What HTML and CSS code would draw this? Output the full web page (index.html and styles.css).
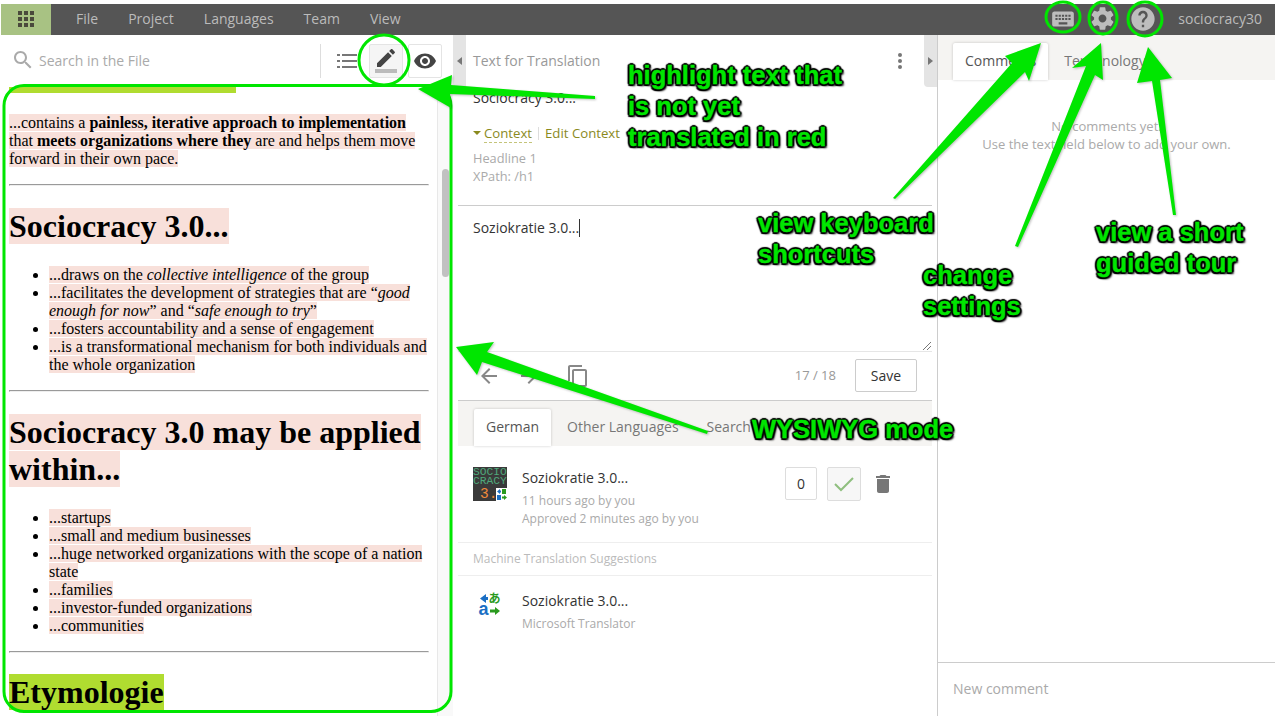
FILE: index.html
```html
<!DOCTYPE html>
<html>
<head>
<title>Text for Translation</title>
<link rel="stylesheet" href="styles.css">
</head>
<body>
<div class="app">

<div class="topbar">
  <div class="grid-btn">
    <svg width="16" height="16" viewBox="0 0 16 16" fill="#4a4a3c"><rect x="0" y="0" width="4" height="4"/><rect x="6" y="0" width="4" height="4"/><rect x="12" y="0" width="4" height="4"/><rect x="0" y="6" width="4" height="4"/><rect x="6" y="6" width="4" height="4"/><rect x="12" y="6" width="4" height="4"/><rect x="0" y="12" width="4" height="4"/><rect x="6" y="12" width="4" height="4"/><rect x="12" y="12" width="4" height="4"/></svg>
  </div>
  <div class="nav"><span>File</span><span>Project</span><span>Languages</span><span>Team</span><span>View</span></div>
  <div class="top-right">
    <svg class="kbd" width="26" height="26" viewBox="0 0 24 24" fill="#bdbdbd"><path d="M20 5H4c-1.1 0-1.99.9-1.99 2L2 17c0 1.1.9 2 2 2h16c1.1 0 2-.9 2-2V7c0-1.1-.9-2-2-2zm-9 3h2v2h-2V8zm0 3h2v2h-2v-2zM8 8h2v2H8V8zm0 3h2v2H8v-2zm-1 2H5v-2h2v2zm0-3H5V8h2v2zm9 7H8v-2h8v2zm0-4h-2v-2h2v2zm0-3h-2V8h2v2zm3 3h-2v-2h2v2zm0-3h-2V8h2v2z"/></svg>
    <svg class="gear" width="27" height="27" viewBox="0 0 24 24" fill="#bdbdbd"><path d="M19.43 12.98c.04-.32.07-.64.07-.98s-.03-.66-.07-.98l2.11-1.65c.19-.15.24-.42.12-.64l-2-3.46c-.12-.22-.39-.3-.61-.22l-2.49 1c-.52-.4-1.08-.73-1.69-.98l-.38-2.65C14.46 2.18 14.25 2 14 2h-4c-.25 0-.46.18-.49.42l-.38 2.65c-.61.25-1.17.59-1.69.98l-2.49-1c-.23-.09-.49 0-.61.22l-2 3.46c-.13.22-.07.49.12.64l2.11 1.65c-.04.32-.07.65-.07.98s.03.66.07.98l-2.11 1.65c-.19.15-.24.42-.12.64l2 3.46c.12.22.39.3.61.22l2.49-1c.52.4 1.08.73 1.69.98l.38 2.65c.03.24.24.42.49.42h4c.25 0 .46-.18.49-.42l.38-2.65c.61-.25 1.17-.59 1.69-.98l2.49 1c.23.09.49 0 .61-.22l2-3.46c.12-.22.07-.49-.12-.64l-2.11-1.65zM12 15.5c-1.93 0-3.5-1.57-3.5-3.5s1.57-3.5 3.5-3.5 3.5 1.57 3.5 3.5-1.57 3.5-3.5 3.5z"/></svg>
    <svg class="help" width="28" height="28" viewBox="0 0 24 24" fill="#bdbdbd"><path d="M12 2C6.48 2 2 6.48 2 12s4.48 10 10 10 10-4.48 10-10S17.52 2 12 2zm1 17h-2v-2h2v2zm2.07-7.75l-.9.92C13.45 12.9 13 13.5 13 15h-2v-.5c0-1.1.45-2.1 1.17-2.83l1.24-1.26c.37-.36.59-.86.59-1.41 0-1.1-.9-2-2-2s-2 .9-2 2H8c0-2.21 1.79-4 4-4s4 1.79 4 4c0 .88-.36 1.68-.93 2.25z"/></svg>
    <span class="user">sociocracy30</span>
  </div>
</div>

<div class="columns">

  <div class="left">
    <div class="search-row">
      <svg class="search-icon" width="24" height="24" viewBox="0 0 24 24" fill="#aaa"><path d="M15.5 14h-.79l-.28-.27C15.41 12.59 16 11.11 16 9.5 16 5.91 13.09 3 9.5 3S3 5.91 3 9.5 5.91 16 9.5 16c1.61 0 3.09-.59 4.23-1.57l.27.28v.79l5 4.99L20.49 19l-4.99-5zm-6 0C7.01 14 5 11.99 5 9.5S7.01 5 9.5 5 14 7.01 14 9.5 11.99 14 9.5 14z"/></svg>
      <span class="search-text">Search in the File</span>
      <div class="mode-btns">
        <svg class="list-icon" width="20" height="16" viewBox="0 0 20 16" fill="#777"><rect x="0" y="1" width="3" height="2"/><rect x="5" y="1" width="15" height="2"/><rect x="0" y="7" width="3" height="2"/><rect x="5" y="7" width="15" height="2"/><rect x="0" y="13" width="3" height="2"/><rect x="5" y="13" width="15" height="2"/></svg>
        <div class="mode-btn active">
          <svg width="24" height="24" viewBox="0 0 24 24" fill="#444"><path d="M3 17.25V21h3.75L17.81 9.94l-3.75-3.75L3 17.25zM20.71 7.04c.39-.39.39-1.02 0-1.41l-2.34-2.34c-.39-.39-1.02-.39-1.41 0l-1.83 1.83 3.75 3.75 1.83-1.83z"/></svg>
          <div class="pencil-line"></div>
        </div>
        <div class="mode-btn">
          <svg width="24" height="24" viewBox="0 0 24 24" fill="#444"><path d="M12 4.5C7 4.5 2.73 7.61 1 12c1.73 4.39 6 7.5 11 7.5s9.27-3.11 11-7.5c-1.73-4.39-6-7.5-11-7.5zM12 17c-2.76 0-5-2.24-5-5s2.24-5 5-5 5 2.24 5 5-2.24 5-5 5zm0-8c-1.66 0-3 1.34-3 3s1.34 3 3 3 3-1.34 3-3-1.34-3-3-3z"/></svg>
        </div>
      </div>
    </div>
    <div class="progress"></div>
    <div class="doc-wrap">
      <div class="doc">
        <p><span class="hl">...contains a <b>painless, iterative approach to implementation</b> that <b>meets organizations where they</b> are and helps them move forward in their own pace.</span></p>
        <hr>
        <h1><span class="hl">Sociocracy 3.0...</span></h1>
        <ul>
          <li><span class="hl">...draws on the <i>collective intelligence</i> of the group</span></li>
          <li><span class="hl">...facilitates the development of strategies that are &ldquo;<i>good enough for now</i>&rdquo; and &ldquo;<i>safe enough to try</i>&rdquo;</span></li>
          <li><span class="hl">...fosters accountability and a sense of engagement</span></li>
          <li><span class="hl">...is a transformational mechanism for both individuals and the whole organization</span></li>
        </ul>
        <hr>
        <h1><span class="hl">Sociocracy 3.0 may be applied within...</span></h1>
        <ul>
          <li><span class="hl">...startups</span></li>
          <li><span class="hl">...small and medium businesses</span></li>
          <li><span class="hl">...huge networked organizations with the scope of a nation state</span></li>
          <li><span class="hl">...families</span></li>
          <li><span class="hl">...investor-funded organizations</span></li>
          <li><span class="hl">...communities</span></li>
        </ul>
        <hr>
        <h1><span class="hl-done">Etymologie</span></h1>
      </div>
      <div class="scroll-track"><div class="scroll-thumb"></div></div>
    </div>
  </div>

  <div class="middle">
    <div class="mid-head">
      <div class="gutter"><span class="tri-left"></span></div>
      <span class="mid-title">Text for Translation</span>
      <svg class="dots" width="4" height="16" viewBox="0 0 4 16" fill="#777"><circle cx="2" cy="2" r="2"/><circle cx="2" cy="8" r="2"/><circle cx="2" cy="14" r="2"/></svg>
      <div class="gutter"><span class="tri-right"></span></div>
    </div>
    <div class="source">
      <div class="source-text">Sociocracy 3.0...</div>
      <div class="context-row"><span class="tri-down"></span><span class="context-link">Context</span><span class="context-sep"></span><span>Edit Context</span></div>
      <div class="meta">Headline 1<br>XPath: /h1</div>
    </div>
    <div class="editor">
      <span>Soziokratie 3.0...</span><span class="caret"></span>
      <svg class="grip" width="9" height="9" viewBox="0 0 9 9" stroke="#777" stroke-width="1"><path d="M1 9L9 1M5 9L9 5"/></svg>
    </div>
    <div class="tools">
      <svg width="24" height="24" viewBox="0 0 24 24" fill="#888"><path d="M20 11H7.83l5.59-5.59L12 4l-8 8 8 8 1.41-1.41L7.83 13H20v-2z"/></svg>
      <svg class="tool-next" width="24" height="24" viewBox="0 0 24 24" fill="#888"><path d="M12 4l-1.41 1.41L16.17 11H4v2h12.17l-5.58 5.59L12 20l8-8z"/></svg>
      <svg class="tool-copy" width="24" height="24" viewBox="0 0 24 24" fill="#888"><path d="M16 1H4c-1.1 0-2 .9-2 2v14h2V3h12V1zm3 4H8c-1.1 0-2 .9-2 2v14c0 1.1.9 2 2 2h11c1.1 0 2-.9 2-2V7c0-1.1-.9-2-2-2zm0 16H8V7h11v14z"/></svg>
      <span class="counter">17 / 18</span>
      <span class="save">Save</span>
    </div>
    <div class="tabs mid-tabs">
      <span class="tab on">German</span><span class="tab">Other Languages</span><span class="tab">Search</span>
    </div>
    <div class="result">
      <div class="avatar">
        <div class="avatar-name">SOCIO<br>CRACY</div>
        <div class="avatar-num">3.0</div>
        <svg class="avatar-badge" width="11" height="13" viewBox="0 0 11 13"><rect width="11" height="13" fill="#fff"/><path d="M1 3.500L4 1v1.500h1v2H4V6z" fill="#1b6fc4"/><rect x="1" y="7" width="4" height="5" fill="#1b6fc4"/><rect x="6" y="1" width="4" height="5" fill="#2a9a1e"/><path d="M6 8.500h2V7l3 2.500L8 12v-1.500H6z" fill="#2a9a1e"/></svg>
      </div>
      <div class="result-body">
        <div class="result-text">Soziokratie 3.0...</div>
        <div class="sub">11 hours ago by you</div>
        <div class="sub">Approved 2 minutes ago by you</div>
      </div>
      <span class="vote">0</span>
      <span class="approve"><svg width="20" height="16" viewBox="0 0 20 16" fill="none" stroke="#8fbf7f" stroke-width="2"><path d="M1 8l6 6L19 2"/></svg></span>
      <svg class="trash" width="24" height="24" viewBox="0 0 24 24" fill="#777"><path d="M6 19c0 1.1.9 2 2 2h8c1.100 0 2-.9 2-2V7H6v12zM19 4h-3.5l-1-1h-5l-1 1H5v2h14V4z"/></svg>
    </div>
    <div class="mt-head">Machine Translation Suggestions</div>
    <div class="mt-row">
      <svg class="mt-icon" width="24" height="25" viewBox="0 0 24 25">
        <path d="M2 7.500L8 3v3h2v3H8v3z" fill="#1b6fc4"/>
        <text x="10.500" y="12" class="mt-ja">あ</text>
        <text x="0.500" y="23.500" class="mt-en">a</text>
        <path d="M12 18.500h5V16l5 4-5 4v-2.500h-5z" fill="#2a9a1e"/>
      </svg>
      <div>
        <div class="result-text">Soziokratie 3.0...</div>
        <div class="sub">Microsoft Translator</div>
      </div>
    </div>
  </div>

  <div class="right">
    <div class="tabs right-tabs">
      <span class="tab on">Comments</span><span class="tab">Terminology</span>
    </div>
    <div class="no-comments">No comments yet.<br>Use the text field below to add your own.</div>
    <div class="new-comment">New comment</div>
  </div>

</div>

<div class="notes">
  <svg class="notes-art" width="1275" height="716" viewBox="0 0 1275 716">
    <g fill="none" stroke="#00e600" stroke-width="3">
      <rect x="4" y="85.500" width="447" height="626" rx="20"/>
      <ellipse cx="384" cy="60" rx="25" ry="25"/>
      <ellipse cx="1063" cy="17" rx="17" ry="15"/>
      <ellipse cx="1103" cy="18" rx="14" ry="16"/>
      <ellipse cx="1145" cy="19" rx="17" ry="17"/>
    </g>
    <g class="arrows" fill="#00e600">
      <path d="M418 89L452 75L451 85L595 96L595 99L450 94L451 108z"/>
      <path d="M1041 43L1005 56L1012 63L893 198L895 199L1025 72L1029 81z"/>
      <path d="M1101 43L1072 68L1086 66L1015 246L1018 247L1095 75L1103 80z"/>
      <path d="M1148 47L1137 83L1152 81L1173 215L1176 215L1160 80L1172 78z"/>
      <path d="M456 347L494 342L487 352L708 431L707 434L482 362L477 375z"/>
    </g>
  </svg>
  <div class="note note-a">highlight text that<br>is not yet<br>translated in red</div>
  <div class="note note-b">view keyboard<br>shortcuts</div>
  <div class="note note-c">change<br>settings</div>
  <div class="note note-d">view a short<br>guided tour</div>
  <div class="note note-e">WYSIWYG mode</div>
</div>

</div>
</body>
</html>
```

FILE: styles.css
```css
* {
  box-sizing: border-box;
}
html, body {
  margin: 0;
  height: 100%;
  overflow: hidden;
  background: #fff;
}
body {
  font-family: "Open Sans", sans-serif;
  font-size: 14px;
  color: #333;
}
.app {
  position: relative;
  width: 1275px;
  height: 716px;
  padding: 4px 0 0 1px;
  display: flex;
  flex-direction: column;
  overflow: hidden;
}

/* top bar */
.topbar {
  height: 31px;
  background: #555;
  display: flex;
  align-items: center;
  flex: none;
}
.grid-btn {
  width: 50px;
  height: 31px;
  padding-bottom: 2px;
  background: #a8c283;
  display: flex;
  align-items: center;
  justify-content: center;
}
.nav {
  display: flex;
  gap: 30px;
  margin-left: 25px;
  padding-bottom: 2px;
  color: #bbb;
}
.top-right {
  margin-left: auto;
  display: flex;
  align-items: center;
  color: #bbb;
  padding: 0 13px 2px 0;
}
.gear {
  margin-left: 13px;
}
.help {
  margin-left: 13px;
}
.user {
  margin-left: 21px;
}

.columns {
  flex: 1;
  display: flex;
  min-height: 0;
}

/* left column */
.left {
  width: 452px;
  flex: none;
  display: flex;
  flex-direction: column;
}
.search-row {
  height: 52px;
  flex: none;
  display: flex;
  align-items: center;
  padding: 0 11px 0 10px;
}
.search-icon {
  margin: 0 4px 2px 0;
}
.search-text {
  color: #aaa;
  padding-bottom: 2px;
}
.mode-btns {
  margin-left: auto;
  height: 34px;
  display: flex;
  align-items: center;
  border-left: 1px solid #ddd;
  padding-left: 16px;
}
.list-icon {
  margin-right: 12px;
}
.mode-btn {
  position: relative;
  width: 34px;
  height: 34px;
  border: 1px solid #e4e4e4;
  border-radius: 2px;
  margin-right: 5px;
  display: flex;
  align-items: center;
  justify-content: center;
}
.mode-btn:last-child {
  margin-right: 0;
}
.mode-btn.active {
  background: #f5f5f5;
  padding-bottom: 6px;
}
.pencil-line {
  position: absolute;
  left: 5px;
  right: 5px;
  bottom: 4px;
  height: 4px;
  background: #bbb;
}
.progress {
  height: 6px;
  width: 227px;
  margin-left: 8px;
  background: #b0dc30;
  flex: none;
}
.doc-wrap {
  flex: 1;
  min-height: 0;
  display: flex;
}
.doc {
  width: 436px;
  flex: none;
  padding: 5.200px 8px 0;
  font-family: "Liberation Serif", serif;
  font-size: 16px;
  color: #000;
  overflow: hidden;
}
.hl {
  background: #f8e0da;
}
.hl-done {
  background: #b0dc30;
}
.scroll-track {
  flex: 1;
  background: #f9f9f9;
  border-left: 1px solid #e8e8e8;
  padding: 76px 3px 0 4px;
}
.scroll-thumb {
  width: 7px;
  height: 108px;
  background: #c1c1c1;
  border-radius: 4px;
}

/* middle column */
.middle {
  width: 485px;
  flex: none;
  border-right: 1px solid #ccc;
  display: flex;
  flex-direction: column;
}
.mid-head {
  height: 52px;
  flex: none;
  display: flex;
  align-items: center;
  color: #999;
}
.gutter {
  width: 13px;
  height: 52px;
  background: #e4e4e4;
  display: flex;
  align-items: center;
  justify-content: center;
}
.gutter:first-child {
  border-radius: 0 0 0 4px;
}
.gutter:last-child {
  border-radius: 0 0 0 4px;
}
.tri-left, .tri-right, .tri-down {
  width: 0;
  height: 0;
  border-style: solid;
  border-color: transparent;
}
.tri-left {
  border-width: 4px 5px 4px 0;
  border-right-color: #777;
}
.tri-right {
  border-width: 4px 0 4px 5px;
  border-left-color: #777;
}
.mid-title {
  margin-left: 7px;
  padding-bottom: 2px;
}
.dots {
  margin-left: auto;
  margin-right: 22px;
}
.source {
  height: 119px;
  flex: none;
  margin: 0 5px;
  padding: 2px 15px 0;
  border-bottom: 1px solid #ccc;
}
.source-text {
  line-height: 18px;
}
.context-row {
  display: flex;
  align-items: center;
  height: 20px;
  margin-top: 16px;
  color: #8a8a1e;
  font-size: 13.200px;
}
.tri-down {
  border-width: 4px 4px 0 4px;
  border-top-color: #8a8a1e;
  margin-right: 3px;
}
.context-link {
  border-bottom: 1px dashed #c4c47a;
}
.context-sep {
  width: 1px;
  height: 13px;
  background: #ddd;
  margin: 0 6px;
}
.meta {
  margin-top: 6px;
  font-size: 12.800px;
  line-height: 18px;
  color: #aaa;
}
.editor {
  position: relative;
  height: 146px;
  flex: none;
  margin: 0 5px;
  padding: 13px 15px 0;
  border-bottom: 1px solid #e6e6e6;
  line-height: 18px;
}
.caret {
  display: inline-block;
  width: 1px;
  height: 18px;
  background: #333;
  vertical-align: top;
}
.grip {
  position: absolute;
  right: 1px;
  bottom: 1px;
}
.tools {
  height: 49px;
  flex: none;
  margin: 0 5px;
  padding: 0 15px 0 19px;
  display: flex;
  align-items: center;
  border-bottom: 1px solid #ccc;
}
.tool-next {
  margin-left: 16px;
}
.tool-copy {
  margin-left: 25px;
}
.counter {
  margin-left: auto;
  margin-bottom: 2px;
  font-size: 13px;
  color: #999;
}
.save {
  margin: 0 0 2px 19px;
  width: 62px;
  height: 33px;
  border: 1px solid #ccc;
  border-radius: 2px;
  display: flex;
  align-items: center;
  justify-content: center;
}
.tabs {
  background: #f5f4f2;
  display: flex;
  align-items: flex-end;
  flex: none;
  color: #777;
}
.tab {
  height: 37px;
  display: flex;
  align-items: center;
  padding: 0 12px 2px;
}
.tab.on {
  background: #fff;
  color: #555;
  border-radius: 2px 2px 0 0;
  box-shadow: 0 0 3px rgba(0, 0, 0, 0.2);
}
.mid-tabs {
  height: 45px;
  margin: 0 5px;
  padding-left: 16px;
  gap: 4px;
}
.result {
  height: 97px;
  flex: none;
  margin: 0 5px;
  padding: 21px 37px 0 15px;
  display: flex;
  align-items: flex-start;
  border-bottom: 1px solid #eee;
}
.avatar {
  position: relative;
  width: 34px;
  height: 34px;
  background: #3a3a3a;
  flex: none;
  overflow: hidden;
  font-family: "Liberation Mono", monospace;
}
.avatar-name {
  color: #4fa87a;
  font-size: 11.300px;
  line-height: 9px;
  padding-top: 1px;
}
.avatar-num {
  color: #f08a3c;
  font-size: 14.500px;
  line-height: 14px;
  margin: 1px 0 0 7px;
}
.avatar-badge {
  position: absolute;
  right: 0;
  bottom: 0;
}
.result-body {
  margin: 1px 0 0 15px;
}
.result-text {
  line-height: 20px;
  color: #333;
}
.result-text + .sub {
  margin-top: 4px;
}
.sub {
  font-size: 12px;
  line-height: 18px;
  color: #aaa;
}
.vote {
  margin-left: auto;
  width: 32px;
  height: 33px;
  border: 1px solid #ddd;
  border-radius: 2px;
  display: flex;
  align-items: center;
  justify-content: center;
}
.approve {
  margin-left: 10px;
  width: 34px;
  height: 34px;
  border: 1px solid #ddd;
  border-radius: 2px;
  background: #f7f7f7;
  display: flex;
  align-items: center;
  justify-content: center;
}
.trash {
  margin: 5px 0 0 10px;
}
.mt-head {
  height: 33px;
  flex: none;
  margin: 0 5px;
  padding-left: 15px;
  font-size: 12px;
  line-height: 31px;
  color: #bbb;
  border-bottom: 1px solid #eee;
}
.mt-row {
  margin: 0 5px;
  padding: 15px 0 0 20px;
  display: flex;
}
.mt-icon {
  margin-right: 20px;
  flex: none;
  overflow: visible;
}
.mt-ja {
  font-family: "Noto Sans CJK JP", sans-serif;
  font-size: 12px;
  font-weight: 700;
  fill: #2a9a1e;
}
.mt-en {
  font-family: "Liberation Sans", sans-serif;
  font-size: 18px;
  font-weight: 700;
  fill: #1b6fc4;
}

/* right column */
.right {
  flex: 1;
  display: flex;
  flex-direction: column;
  min-width: 0;
}
.right-tabs {
  height: 45px;
  padding-left: 15px;
  gap: 4px;
}
.no-comments {
  margin-top: 37px;
  text-align: center;
  font-size: 13px;
  line-height: 18px;
  color: #aaa;
}
.new-comment {
  margin-top: auto;
  height: 54px;
  border-top: 1px solid #ccc;
  padding-left: 15px;
  line-height: 51px;
  color: #aaa;
}

/* green annotations on top of the screenshot */
.notes {
  position: absolute;
  left: 0;
  top: 0;
  width: 1275px;
  height: 716px;
  pointer-events: none;
}
.notes-art {
  position: absolute;
  left: 0;
  top: 0;
}
.arrows {
  filter: drop-shadow(1px 1px 1px rgba(0, 0, 0, 0.25));
}
.note {
  position: absolute;
  font-family: "Liberation Sans", sans-serif;
  font-weight: 700;
  font-size: 25.500px;
  line-height: 31px;
  white-space: nowrap;
  color: #00e600;
  -webkit-text-stroke: 0.4px #00e600;
  text-shadow: -2px 0 1px #000, 2px 0 1px #000, 0 -2px 1px #000, 0 2px 1px #000, -1.500px -1.500px 1px #000, 1.500px -1.500px 1px #000, -1.500px 1.500px 1px #000, 2px 2px 2px #000;
}
.note-a {
  left: 628px;
  top: 60px;
}
.note-b {
  left: 758px;
  top: 208px;
}
.note-c {
  left: 923px;
  top: 260px;
}
.note-d {
  left: 1096px;
  top: 217px;
}
.note-e {
  left: 752px;
  top: 414px;
}
```
